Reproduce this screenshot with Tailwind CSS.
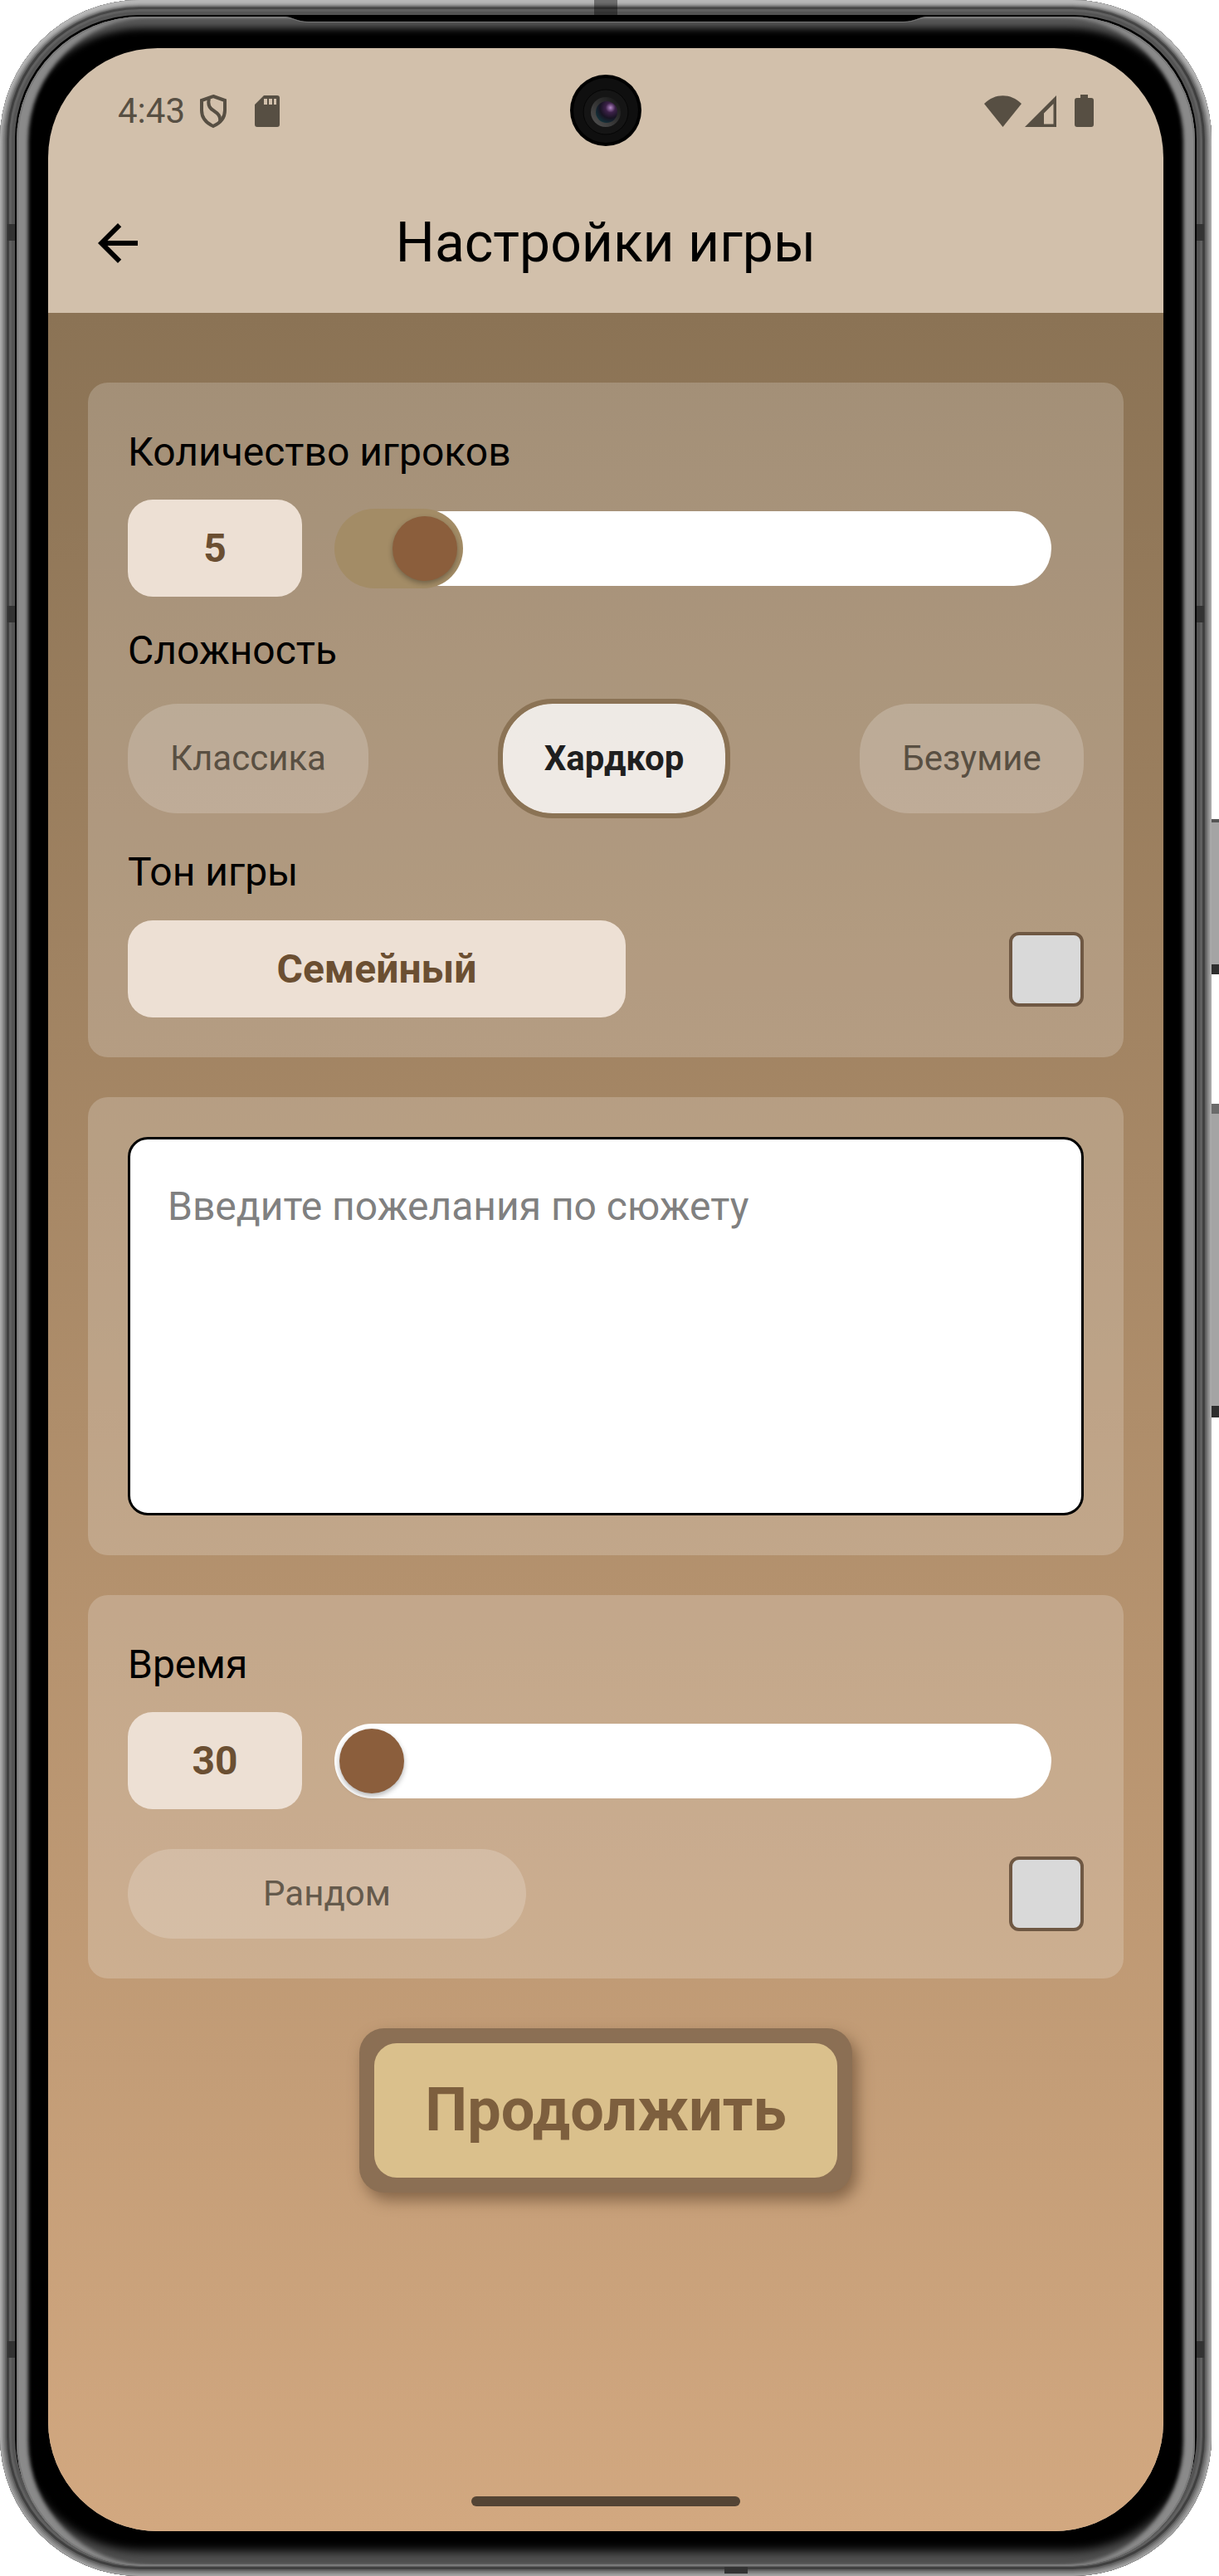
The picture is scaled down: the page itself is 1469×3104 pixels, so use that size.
<!DOCTYPE html>
<html lang="ru">
<head>
<meta charset="utf-8">
<meta name="viewport" content="width=device-width, initial-scale=1">
<title>Настройки игры</title>
<script src="https://cdn.jsdelivr.net/npm/@tailwindcss/browser@4"></script>
</head>
<body class="bg-white font-[Roboto,'Noto_Sans',sans-serif] text-black">
<div class="relative flex min-h-screen pr-[9px]">

  <!-- Side keys -->
  <div class="absolute top-[970px] right-0 h-[124px] w-[9px]"></div>
  <div class="absolute top-[987px] right-0 h-[187px] w-[9px] border-t-4 border-b-[12px] border-t-[#555555] border-b-[#2e2e2e] bg-[#a4a4a4]"></div>
  <div class="absolute top-[1330px] right-0 h-[378px] w-[9px] border-t-[12px] border-b-[14px] border-t-[#6a6a6a] border-b-[#2e2e2e] bg-[#a4a4a4]"></div>

  <!-- Metal rim -->
  <div class="relative flex flex-1 rounded-[168px] bg-black p-5 pb-3 shadow-[inset_0_6px_5px_#b8b8b8,inset_0_0_0_2px_#a0a0a0,inset_0_0_0_4px_#8e8e8e,inset_0_0_0_6px_#7a7a7a,inset_0_0_0_8px_#626262,inset_0_0_0_11px_#404040,inset_0_0_0_14px_#606060,inset_0_0_0_18px_#545454]">
    <!-- Antenna bands -->
    <div class="absolute top-[270px] left-[9px] h-5 w-[9px] bg-[#333333]"></div>
    <div class="absolute top-[270px] right-[9px] h-5 w-[9px] bg-[#333333]"></div>
    <div class="absolute top-[730px] left-[9px] h-5 w-[9px] bg-[#333333]"></div>
    <div class="absolute top-[730px] right-[9px] h-5 w-[9px] bg-[#333333]"></div>
    <div class="absolute bottom-[263px] left-[9px] h-5 w-[9px] bg-[#333333]"></div>
    <div class="absolute right-[9px] bottom-[263px] h-5 w-[9px] bg-[#333333]"></div>
    <div class="absolute top-0 left-1/2 h-[18px] w-7 -translate-x-1/2 bg-black/40"></div>
    <div class="absolute bottom-[3px] left-[873px] h-[8px] w-7 bg-[#333333]"></div>

    <!-- Glass edge -->
    <div class="relative flex flex-1 rounded-[150px] bg-black p-[38px] pb-[42px] shadow-[inset_0_0_0_2px_#7a7a7a,inset_14px_0_4px_#8a8a8a,inset_-14px_0_4px_#8a8a8a,inset_0_14px_10px_#585858,inset_0_-18px_12px_#505050]">
      <svg class="absolute top-0 left-1/2 h-[7px] w-[776px] -translate-x-1/2" viewBox="0 0 776 7"><path d="M0 0H776C764 0 762 6 746 6H30C14 6 12 0 0 0Z" fill="#000"/><path d="M0 1C12 1 14 6.500 30 6.500H746C762 6.500 764 1 776 1" fill="none" stroke="#777"/></svg>

      <!-- Screen -->
      <div class="relative flex flex-1 flex-col overflow-hidden rounded-[132px] bg-[#d2c0ab]">
        <header>
          <div class="flex h-[151px] items-center justify-between pr-[84px] pl-[84px] text-[#574f43]">
            <div class="flex items-center">
              <span class="text-[42px] leading-[60px]">4:43</span>
              <svg class="ml-4 h-[42px] w-[36px]" viewBox="0 0 36 42" fill="none" stroke="currentColor" stroke-width="4"><path d="M18 3L32 8V20C32 29 27 35 18 39C9 35 4 29 4 20V8Z"/><path d="M13 6C11 13 13 17 18 20C24 24 27 27 26 33"/></svg>
              <svg class="ml-8 h-[38px] w-[30px]" viewBox="0 0 30 38" fill="currentColor"><path fill-rule="evenodd" d="M11 0H27A3 3 0 0 1 30 3V35A3 3 0 0 1 27 38H3A3 3 0 0 1 0 35V11ZM11 4V11H15V4ZM17 4V11H21V4ZM23 4V11H26V4Z"/></svg>
            </div>
            <div class="flex items-center">
              <svg class="h-[38px] w-[45px]" viewBox="0 0 45 38" fill="currentColor"><path d="M0 10C13-3 32-3 45 10L22.500 38Z"/></svg>
              <svg class="ml-1 h-[38px] w-[38px]" viewBox="0 0 38 38" fill="currentColor"><path fill-rule="evenodd" d="M38 0V38H0ZM34.500 10L23 21.500V34.500H34.500Z"/></svg>
              <svg class="ml-[22px] h-[39px] w-[23px]" viewBox="0 0 23 39" fill="currentColor"><path d="M7 0H16V4H20A3 3 0 0 1 23 7V36A3 3 0 0 1 20 39H3A3 3 0 0 1 0 36V7A3 3 0 0 1 3 4H7Z"/></svg>
            </div>
          </div>
          <div class="grid h-[168px] grid-cols-[72px_1fr_72px] items-center px-12">
            <button type="button" aria-label="Назад"><svg class="size-[72px]" viewBox="0 0 24 24"><path d="M20 11H7.830L13.420 5.410L12 4L4 12L12 20L13.410 18.590L7.830 13H20Z"/></svg></button>
            <h1 class="text-center text-[66px] leading-[84px]">Настройки игры</h1>
          </div>
        </header>

        <!-- Front camera -->
        <svg class="absolute top-8 left-1/2 size-[86px] -translate-x-1/2" viewBox="0 0 86 86">
          <defs><radialGradient id="lens" cx=".68" cy=".3" r=".75"><stop offset="0" stop-color="#b58ac8"/><stop offset=".3" stop-color="#3c2148"/><stop offset=".65" stop-color="#171322"/><stop offset="1" stop-color="#123038"/></radialGradient>
          <linearGradient id="ring" x1="0" y1="1" x2="1" y2="0"><stop offset="0" stop-color="#555"/><stop offset="1" stop-color="#111"/></linearGradient></defs>
          <circle cx="43" cy="43" r="43"/><circle cx="43" cy="43" r="39" fill="#0f0f0f"/><circle cx="43" cy="45" r="27" fill="#151515" stroke="#050505"/><circle cx="43" cy="45" r="18" fill="url(#ring)"/><circle cx="44" cy="45" r="13" fill="url(#lens)"/>
        </svg>

        <main class="flex flex-1 flex-col items-center gap-12 bg-linear-to-b/srgb from-[#8b7355] to-[#d2a880] px-12 pt-[84px] pb-[30px]">

          <section class="w-full rounded-3xl bg-white/20 p-12">
            <label for="players" class="block text-[48px] leading-[72px]">Количество игроков</label>
            <div class="mt-[21px] flex items-center gap-[39px] pr-[39px]">
              <input id="players" type="text" inputmode="numeric" value="5" class="h-[117px] w-[210px] rounded-[30px] bg-[#ede0d4] text-center text-[48px] leading-[72px] font-bold text-[#6b4f32]">
              <div class="grid flex-1 items-center">
                <div class="col-start-1 row-start-1 h-[90px] rounded-full bg-linear-to-r from-transparent from-10% to-white to-10%"></div>
                <div class="col-start-1 row-start-1 h-24 rounded-[48px] bg-[#a38c66]" style="width: calc(90px + (100% - 90px) / 12)"></div>
                <input type="range" min="4" max="16" value="5" aria-label="Количество игроков" class="col-start-1 row-start-1 mx-[6px] h-[78px] appearance-none bg-transparent [&::-webkit-slider-thumb]:size-[78px] [&::-webkit-slider-thumb]:appearance-none [&::-webkit-slider-thumb]:rounded-full [&::-webkit-slider-thumb]:bg-[#8b5e3c] [&::-webkit-slider-thumb]:shadow-[0_3px_6px_#0000004d]">
              </div>
            </div>

            <fieldset class="mt-[29px]">
              <legend class="text-[48px] leading-[72px]">Сложность</legend>
              <div class="mt-[22px] flex items-center justify-between text-center text-[42px] leading-[60px] text-[#594f42]">
                <label class="relative w-[290px] rounded-[60px] bg-white/20 py-9"><input type="radio" name="level" class="sr-only">Классика</label>
                <label class="relative w-[280px] rounded-[66px] border-6 border-[#8b7355] bg-white/80 bg-clip-padding py-9 font-bold text-[#1f1f1f]"><input type="radio" name="level" class="sr-only" checked>Хардкор</label>
                <label class="relative w-[270px] rounded-[60px] bg-white/20 py-9"><input type="radio" name="level" class="sr-only">Безумие</label>
              </div>
            </fieldset>

            <h2 class="mt-[29px] text-[48px] leading-[72px]">Тон игры</h2>
            <div class="mt-[22px] flex items-center justify-between">
              <button type="button" class="h-[117px] w-[600px] rounded-[30px] bg-[#ede0d4] text-[48px] leading-[72px] font-bold text-[#6b4f32]">Семейный</button>
              <input type="checkbox" aria-label="Тон игры" class="size-[90px] appearance-none rounded-xl border-4 border-[#6f5843] bg-[#d9d9d9]">
            </div>
          </section>

          <section class="w-full rounded-3xl bg-white/20 p-12">
            <textarea aria-label="Пожелания по сюжету" placeholder="Введите пожелания по сюжету" class="block h-[456px] w-full resize-none rounded-3xl border-3 border-black bg-white p-[45px] text-[48px] leading-[72px] placeholder:text-[#808080]"></textarea>
          </section>

          <section class="w-full rounded-3xl bg-white/20 p-12">
            <label for="time" class="block text-[48px] leading-[72px]">Время</label>
            <div class="mt-[21px] flex items-center gap-[39px] pr-[39px]">
              <input id="time" type="text" inputmode="numeric" value="30" class="h-[117px] w-[210px] rounded-[30px] bg-[#ede0d4] text-center text-[48px] leading-[72px] font-bold text-[#6b4f32]">
              <div class="grid flex-1 items-center">
                <div class="col-start-1 row-start-1 h-[90px] rounded-full bg-white"></div>
                <input type="range" min="30" max="180" value="30" aria-label="Время" class="col-start-1 row-start-1 mx-[6px] h-[78px] appearance-none bg-transparent [&::-webkit-slider-thumb]:size-[78px] [&::-webkit-slider-thumb]:appearance-none [&::-webkit-slider-thumb]:rounded-full [&::-webkit-slider-thumb]:bg-[#8b5e3c] [&::-webkit-slider-thumb]:shadow-[0_3px_6px_#0000004d]">
              </div>
            </div>
            <div class="mt-12 flex items-center justify-between">
              <button type="button" class="h-[108px] w-[480px] rounded-full bg-white/20 text-[42px] leading-[60px] text-[#655a4c]">Рандом</button>
              <input type="checkbox" aria-label="Рандом" class="size-[90px] appearance-none rounded-xl border-4 border-[#6f5843] bg-[#d9d9d9]">
            </div>
          </section>

          <button type="button" class="mt-3 h-[198px] rounded-[30px] bg-[#8b6f54] p-[18px] text-[72px] leading-[84px] font-bold text-[#7d5f3e] shadow-[6px_9px_18px_#5a402899]"><span class="flex h-full items-center rounded-[27px] bg-[#dac08c] px-[61px]">Продолжить</span></button>

          <div class="mt-auto h-3 w-[324px] rounded-full bg-[#544434]"></div>
        </main>
      </div>
    </div>
  </div>
</div>
</body>
</html>
